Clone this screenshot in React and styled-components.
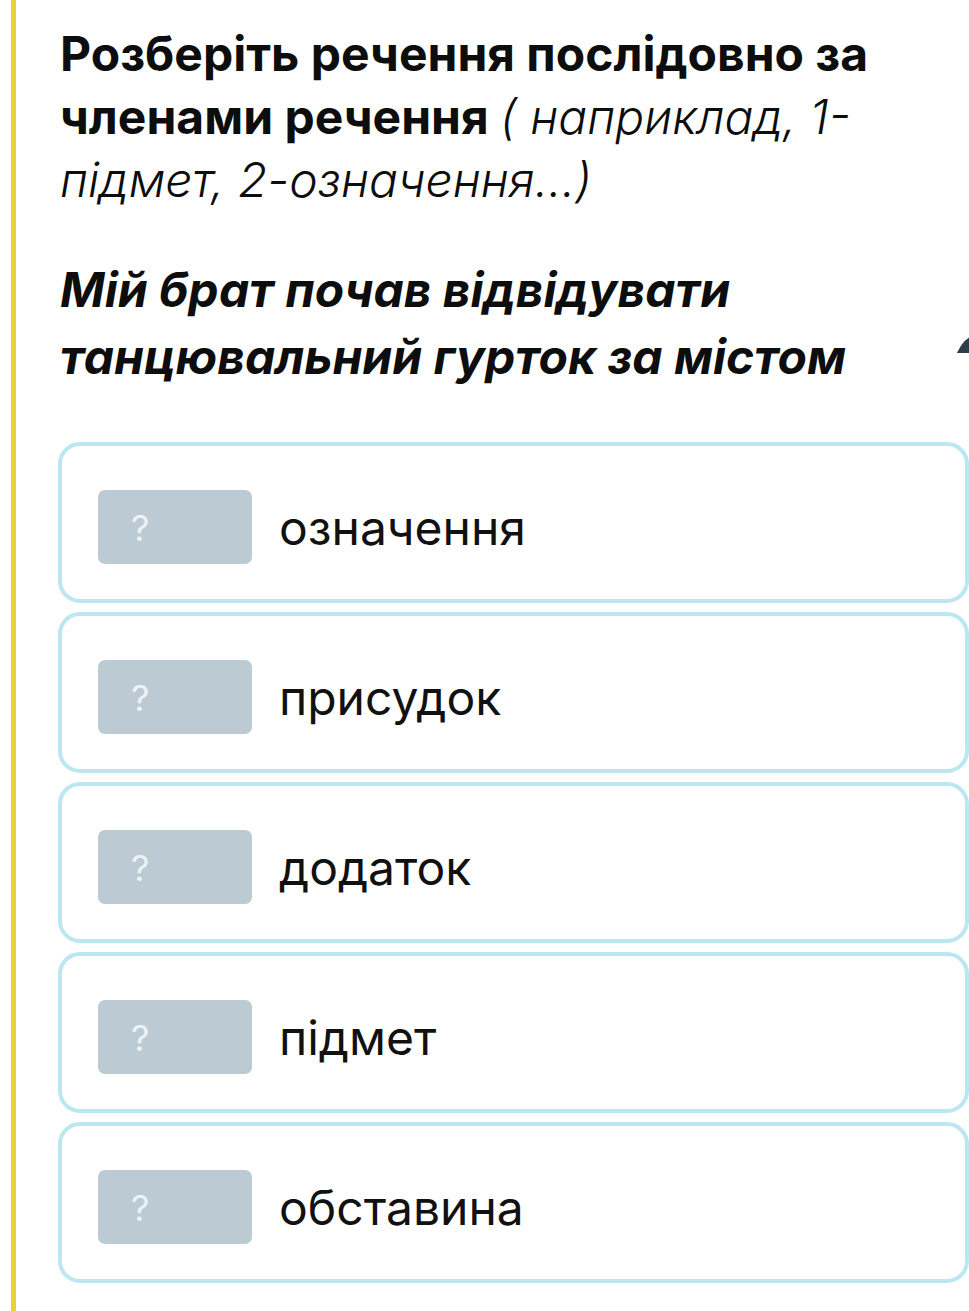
import React from 'react'
import styled, { createGlobalStyle } from 'styled-components'

const GlobalStyle = createGlobalStyle`
    html, body {
        margin: 0;
        padding: 0;
        background: #ffffff;
    }
    body {
        font-family: Inter, "Open Sans", sans-serif;
        overflow: hidden;
    }
`

const options = ['означення', 'присудок', 'додаток', 'підмет', 'обставина']

function App() {
    return (
        <>
            <GlobalStyle />
            <Page>
                <Column>
                    <Heading>
                        Розберіть речення послідовно за
                        <br />
                        членами речення <Hint>( наприклад, 1-</Hint>
                        <br />
                        <Hint>підмет, 2-означення...)</Hint>
                    </Heading>
                    <Sentence>
                        Мій брат почав відвідувати
                        <br />
                        танцювальний гурток за містом
                    </Sentence>
                    <Options>
                        {options.map(text => (
                            <Card key={text}>
                                <Slot>?</Slot>
                                <Label>{text}</Label>
                            </Card>
                        ))}
                    </Options>
                </Column>
                <EdgeMark />
            </Page>
        </>
    )
}

export default App

const Page = styled.div`
    position: relative;
    width: 969px;
    height: 1311px;
    padding-left: 11px;
    box-sizing: border-box;
    overflow: hidden;
`

const Column = styled.div`
    height: 100%;
    border-left: 5px solid #e8d430;
    padding: 22px 0 0 42px;
    box-sizing: border-box;
`

const Heading = styled.div`
    font-size: 48px;
    line-height: 63px;
    font-weight: 700;
    color: #0d0d0d;
    padding-left: 2px;
    white-space: nowrap;
`

const Hint = styled.span`
    font-weight: 300;
    font-style: italic;
`

const Sentence = styled.div`
    margin-top: 45px;
    font-size: 48px;
    line-height: 67px;
    font-weight: 700;
    font-style: italic;
    color: #0d0d0d;
    padding-left: 2px;
    white-space: nowrap;
`

const Options = styled.div`
    margin-top: 52px;
    display: flex;
    flex-direction: column;
    gap: 9px;
`

const Card = styled.div`
    height: 161px;
    box-sizing: border-box;
    border: 4px solid #bce7f0;
    border-radius: 22px;
    background: #ffffff;
    display: flex;
    align-items: flex-start;
    padding: 44px 0 0 36px;
    gap: 27px;
`

const Slot = styled.div`
    width: 154px;
    height: 74px;
    box-sizing: border-box;
    flex-shrink: 0;
    background: #bccbd3;
    border-radius: 7px;
    display: flex;
    align-items: center;
    padding-left: 33px;
    padding-top: 2px;
    font-size: 36px;
    font-weight: 400;
    color: #edf2f4;
`

const Label = styled.div`
    height: 74px;
    display: flex;
    align-items: center;
    font-size: 48px;
    font-weight: 400;
    color: #111111;
`

const EdgeMark = styled.div`
    position: absolute;
    left: 962px;
    top: 335px;
    width: 24px;
    height: 18px;
    background: #2f3e4d;
    border-radius: 10px 0 0 0;
    transform: skewX(-30deg);
`
